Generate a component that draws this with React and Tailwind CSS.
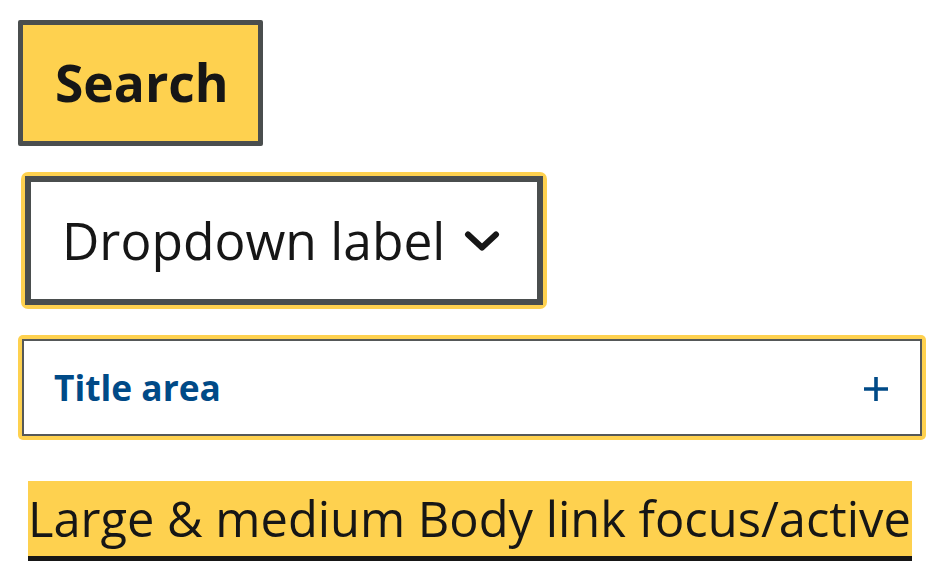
export default function App() {
  return (
    <div className="min-h-[588px] w-[952px] bg-white pl-[18px] pt-[20px] flex flex-col items-start" style={{ fontFamily: '"Open Sans", sans-serif' }}>
      <button className="w-[245px] h-[126px] border-[5px] border-[#4a4e4e] bg-[#fed14f] rounded-[2px] flex items-center pl-[32px] text-[#161616] font-bold text-[51.5px] leading-none">
        Search
      </button>

      <div className="mt-[26px] ml-[3px] p-[4px] rounded-[7px] bg-[#fed14f]">
        <div className="w-[518px] h-[129px] border-[6px] border-[#4a4e4e] bg-white flex items-center pl-[31px] text-[#161616]">
          <span className="text-[51.5px] leading-none">Dropdown label</span>
          <svg className="ml-[19px] mt-[2px]" width="36" height="24" viewBox="0 0 36 24">
            <path d="M4 4.5 L18 17.5 L32 4.5" fill="none" stroke="#161616" strokeWidth="6" strokeLinecap="round" strokeLinejoin="round" />
          </svg>
        </div>
      </div>

      <div className="mt-[26px] p-[4px] rounded-[5px] bg-[#fed14f]">
        <div className="w-[900px] h-[97px] border-2 border-[#555858] bg-white flex items-center justify-between pl-[30px] pr-[32px]">
          <span className="text-[#004a87] font-bold text-[35.3px] leading-none">Title area</span>
          <svg width="24" height="24" viewBox="0 0 24 24" className="mt-[2px]">
            <path d="M12 0 V24 M0 12 H24" stroke="#004a87" strokeWidth="3.6" />
          </svg>
        </div>
      </div>

      <a className="mt-[41px] ml-[10px] w-[884px] h-[80px] bg-[#fed14f] border-b-[5px] border-[#161616] text-[#161616] text-[48.8px] leading-none flex items-center whitespace-nowrap">
        Large &amp; medium Body link focus/active
      </a>
    </div>
  );
}
